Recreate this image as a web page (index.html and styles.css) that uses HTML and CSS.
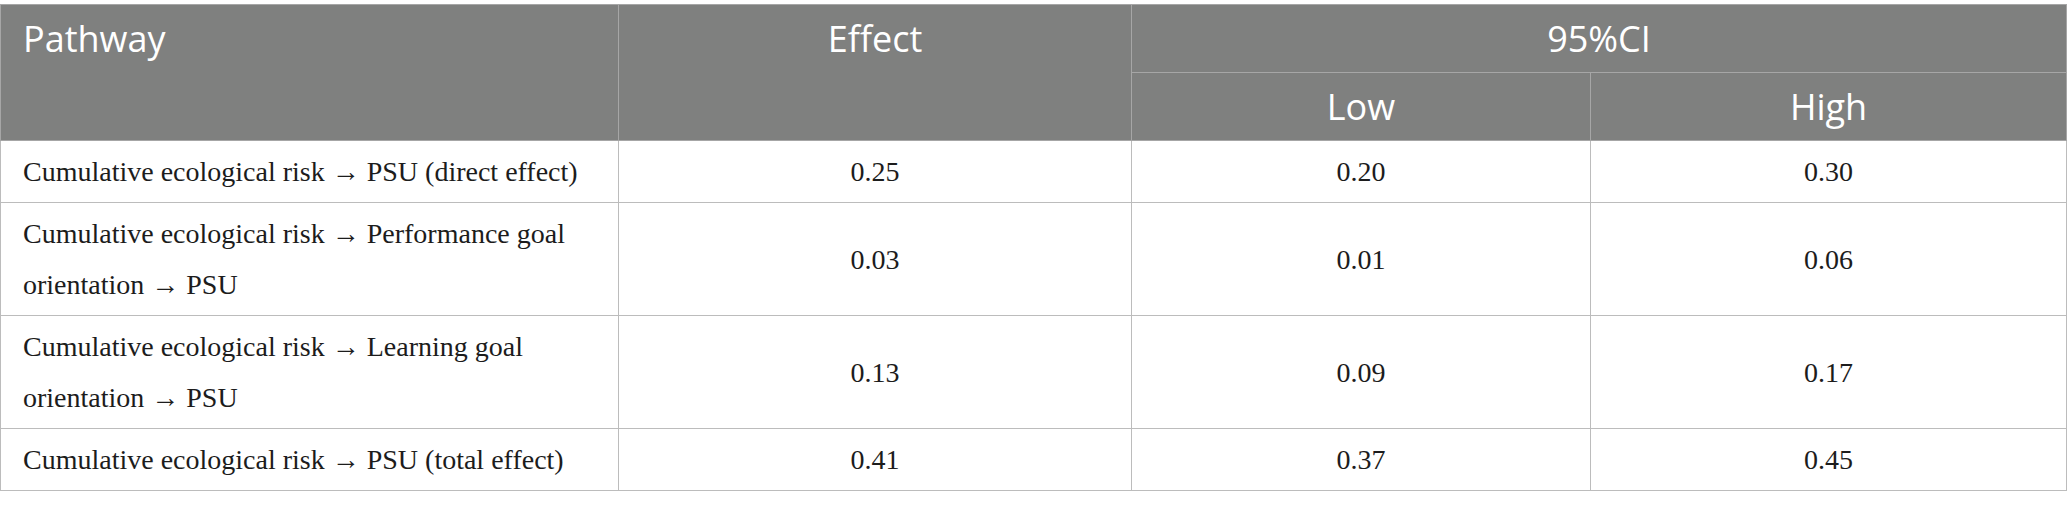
FILE: index.html
```html
<!DOCTYPE html>
<html>
<head>
<meta charset="utf-8">
<link rel="stylesheet" href="styles.css">
</head>
<body>
<div class="wrap">
<table class="tbl">
  <colgroup>
    <col class="c1"><col class="c2"><col class="c3"><col class="c4">
  </colgroup>
  <thead>
    <tr>
      <th rowspan="2" class="h-left">Pathway</th>
      <th rowspan="2" class="h-top">Effect</th>
      <th colspan="2">95%CI</th>
    </tr>
    <tr>
      <th>Low</th>
      <th>High</th>
    </tr>
  </thead>
  <tbody>
    <tr><td class="path">Cumulative ecological risk → PSU (direct effect)</td><td>0.25</td><td>0.20</td><td>0.30</td></tr>
    <tr><td class="path">Cumulative ecological risk → Performance goal orientation → PSU</td><td>0.03</td><td>0.01</td><td>0.06</td></tr>
    <tr><td class="path">Cumulative ecological risk → Learning goal orientation → PSU</td><td>0.13</td><td>0.09</td><td>0.17</td></tr>
    <tr><td class="path">Cumulative ecological risk → PSU (total effect)</td><td>0.41</td><td>0.37</td><td>0.45</td></tr>
  </tbody>
</table>
</div>
</body>
</html>
```

FILE: styles.css
```css
html, body {
  margin: 0;
  padding: 0;
  background: #ffffff;
}
.wrap {
  padding: 4px 1px 0 0;
}
.tbl {
  border-collapse: collapse;
  width: 2066px;
  table-layout: fixed;
}
.c1 { width: 618px; }
.c2 { width: 513px; }
.c3 { width: 459px; }
.c4 { width: 476px; }
.tbl th {
  background: #7f807f;
  color: #ffffff;
  font-family: "Open Sans", "Noto Sans", sans-serif;
  font-weight: 400;
  font-size: 36px;
  line-height: 50px;
  padding: 9px 22px 8px;
  text-align: center;
  vertical-align: middle;
  border: 1px solid #a6a6a6;
}
.tbl th.h-left {
  text-align: left;
  vertical-align: top;
}
.tbl th.h-top {
  vertical-align: top;
}
.tbl td {
  font-family: "Liberation Serif", "Times New Roman", serif;
  font-size: 28px;
  line-height: 51px;
  color: #1c1c1c;
  padding: 5px 22px;
  text-align: center;
  vertical-align: middle;
  border: 1px solid #bcbcbc;
}
.tbl td.path {
  text-align: left;
}
```
